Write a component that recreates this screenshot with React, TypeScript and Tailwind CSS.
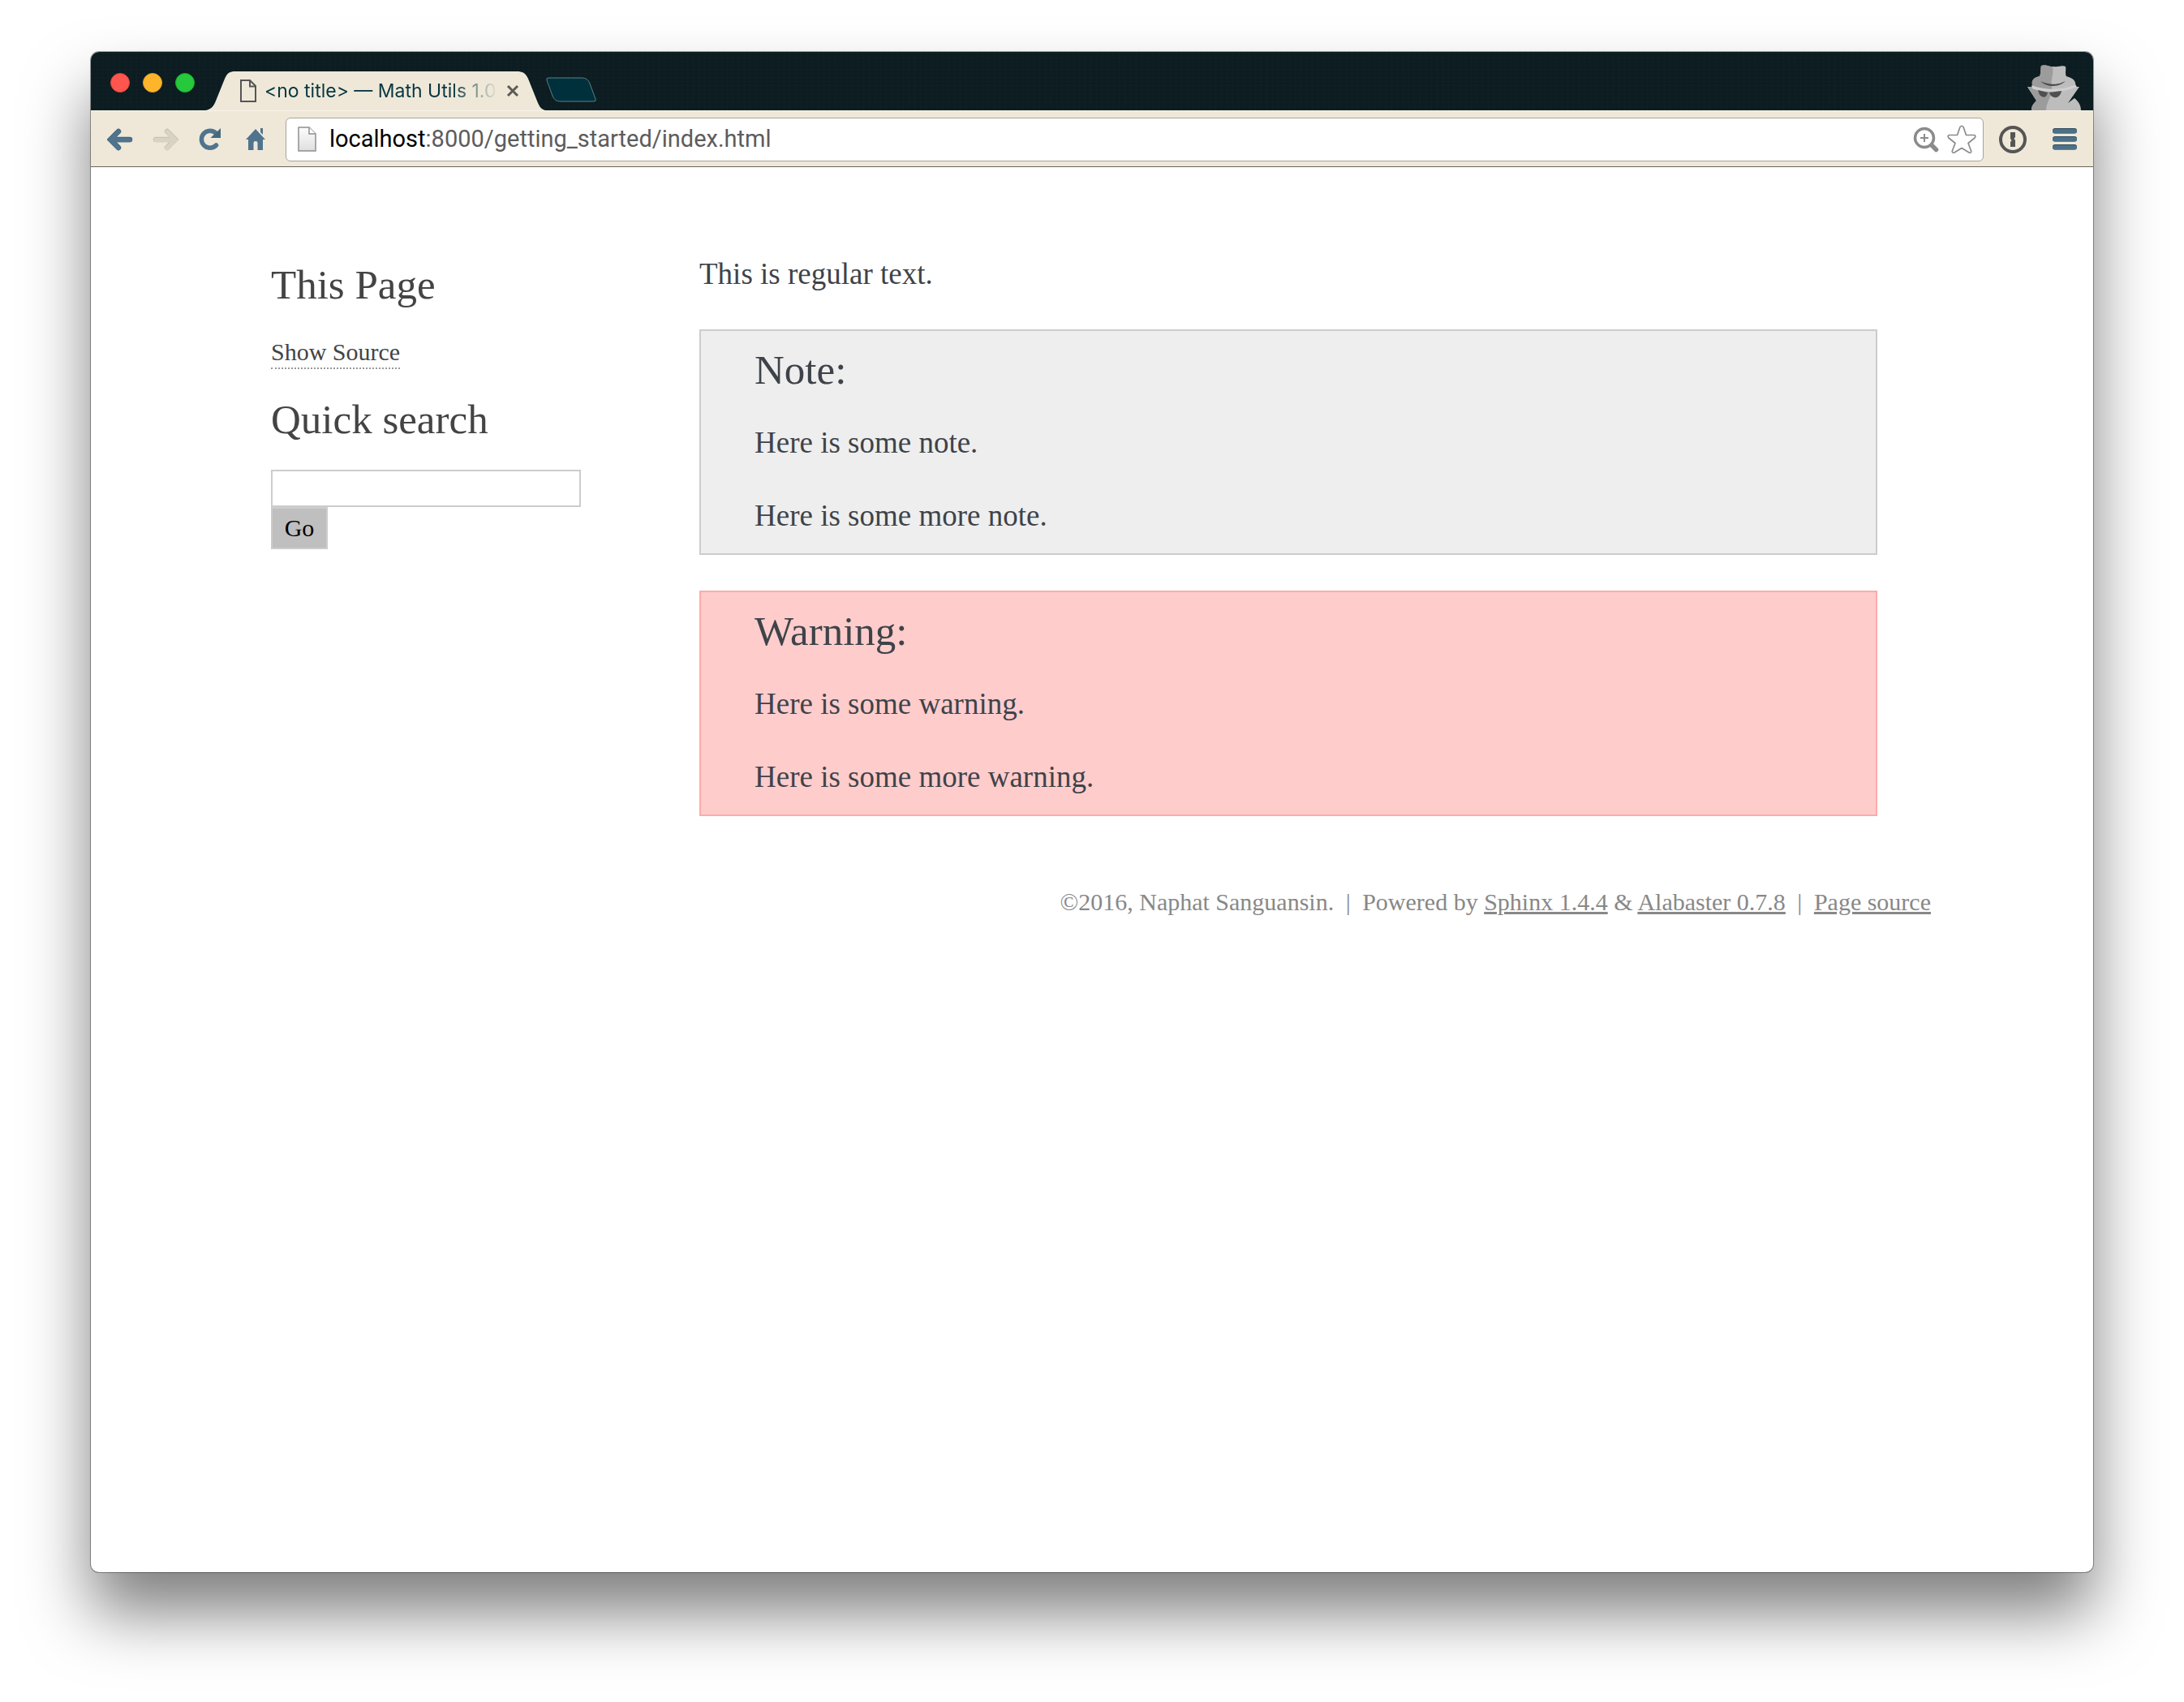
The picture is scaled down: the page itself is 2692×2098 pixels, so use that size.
import React from "react";

const serif = "font-['Liberation_Serif',serif]";

function TabShape() {
  return (
    <svg className="absolute inset-0 size-full" viewBox="0 0 416 49" preserveAspectRatio="none" aria-hidden="true">
      <path d="M0 49C7 47 9 44 12 37L23 9C26 2 29 0 36 0H381C388 0 392 2 395 9L406 37C409 44 410 47 416 49Z" fill="#efe8d8" />
    </svg>
  );
}

function DocIcon() {
  return (
    <svg width="20" height="28" viewBox="0 0 20 28" fill="none" stroke="#555" strokeWidth="2" aria-hidden="true">
      <path d="M1 1H12L19 8V27H1Z" />
      <path d="M12 1V8.500H19" />
    </svg>
  );
}

function PageIcon() {
  return (
    <svg width="24" height="32" viewBox="0 0 24 32" aria-hidden="true">
      <defs>
        <linearGradient id="page" x1="0" y1="0" x2="0" y2="1">
          <stop offset="0" stopColor="#fdfdfd" />
          <stop offset="1" stopColor="#dfdfdf" />
        </linearGradient>
      </defs>
      <path d="M1 1H14L22 9V30H1Z" fill="url(#page)" stroke="#8f8f8f" strokeWidth="1.500" />
      <path d="M14 1V9H22" fill="#fff" stroke="#8f8f8f" strokeWidth="1.500" />
    </svg>
  );
}

function Arrow({ flip }: { flip?: boolean }) {
  return (
    <svg width="32" height="30" viewBox="0 0 32 30" fill="none" strokeLinecap="round" strokeWidth="6.500" className={flip ? "-scale-x-100" : ""} aria-hidden="true">
      <path d="M14 5L4 15L14 25M5 15H28" stroke={flip ? "#c3beb1" : "#3f5f74"} />
      <path d="M14 5.500L4 15.500L14 25.500M5 15.500H28" stroke={flip ? "#d8d3c5" : "#50748e"} strokeWidth="5.500" />
    </svg>
  );
}

function ReloadIcon() {
  return (
    <svg width="30" height="30" viewBox="0 0 30 30" aria-hidden="true">
      <path d="M22.500 7.500A10.500 10.500 0 1 0 22.500 22" fill="none" stroke="#50748e" strokeWidth="5.500" strokeLinecap="round" />
      <path d="M28 1V13H15.500Z" fill="#46687f" />
    </svg>
  );
}

function HomeIcon() {
  return (
    <svg width="26" height="30" viewBox="0 0 26 30" fill="#50748e" aria-hidden="true">
      <path d="M13 2L25 15H22V28H15.500V19Q15.500 17 13 17Q10.500 17 10.500 19V28H4V15H1Z" />
      <path d="M19 1H22V9L19 6Z" />
    </svg>
  );
}

function ZoomIcon() {
  return (
    <svg width="32" height="32" viewBox="0 0 32 32" fill="none" stroke="#8b8b8b" aria-hidden="true">
      <circle cx="14" cy="14" r="11.500" strokeWidth="3.500" />
      <path d="M23 23L28.500 28.500" strokeWidth="5.500" strokeLinecap="round" />
      <path d="M14 9V19M9 14H19" strokeWidth="2" />
    </svg>
  );
}

function StarIcon() {
  return (
    <svg width="36" height="36" viewBox="0 0 36 36" fill="#fff" stroke="#8b8b8b" strokeWidth="1.700" strokeLinejoin="round" aria-hidden="true">
      <path d="M16 2.500Q18 0 20 2.500L23.500 12.500H33.500Q36 13.500 34 16L26 22.500L29.800 32.500Q29.500 35 27 34L18 28.500L9 34Q6.500 35 6.200 32.500L10 22.500L2 16Q0 13.500 2.500 12.500H12.500Z" />
    </svg>
  );
}

function KeyholeIcon() {
  return (
    <svg width="36" height="36" viewBox="0 0 36 36" aria-hidden="true">
      <circle cx="18" cy="18" r="15" fill="none" stroke="#555" strokeWidth="4" />
      <path d="M15 9H21V15L19.500 17L21 19V27H15V21L16.500 19L15 17Z" fill="#555" />
    </svg>
  );
}

function MenuIcon() {
  return (
    <svg width="30" height="28" viewBox="0 0 30 28" aria-hidden="true">
      {[0, 10, 20].map((y) => (
        <g key={y}>
          <rect y={y} width="30" height="6.500" rx="3" fill="#2f4a5c" />
          <rect y={y + 1} width="30" height="5.500" rx="2.700" fill="#4b7089" />
        </g>
      ))}
    </svg>
  );
}

function Incognito() {
  return (
    <svg width="68" height="57" viewBox="0 0 68 57" aria-hidden="true">
      <path d="M6 57C6 50 10 48 12 45L1 28H8C4 20 10 16 16 15C18 11 17 5 18 2C24 0 29 4 34 3C39 4 44 1 48 3C49 7 47 12 49 15C57 17 63 22 59 28H65L51 48L59 42C64 46 67 51 67 57Z" fill="#bdbdbd" />
      <path d="M6 57C6 50 10 48 12 45L1 28H8C4 20 10 16 16 15C18 11 17 5 18 2C23 0 28 3 32 4C34 12 29 21 31 27C33 38 24 46 24 57Z" fill="#9c9c9c" />
      <path d="M6 26C20 32 45 33 60 25L62 28C48 35 20 36 7 30Z" fill="#cfcfcf" />
      <path d="M17 21C28 26 38 26 48 21C40 29 25 29 17 21Z" fill="#4a4a4a" />
      <path d="M14 32L26 35C25 40 22 42 19 40C16 39 15 36 14 32ZM28 35L43 33C42 39 38 42 34 41C30 40 29 38 28 35Z" fill="#505050" />
    </svg>
  );
}

function BrowserChrome() {
  return (
    <header>
      <div className="flex h-[72px] items-end bg-[#0c1c20] bg-[repeating-linear-gradient(90deg,#12262a66_0_1px,transparent_1px_7px),repeating-linear-gradient(0deg,#12262a55_0_1px,transparent_1px_5px)] pl-6">
        <div className="flex gap-4 self-center pt-1">
          <button aria-label="Close window" className="size-6 rounded-full border border-[#e0443e] bg-[#ff554f]" />
          <button aria-label="Minimize window" className="size-6 rounded-full border border-[#dfa123] bg-[#ffb52b]" />
          <button aria-label="Zoom window" className="size-6 rounded-full border border-[#1dad2b] bg-[#26c83c]" />
        </div>
        <div className="relative ml-[14px] flex h-12 w-[418px] items-center pl-[42px] text-[23px] text-[#073642]">
          <TabShape />
          <div className="relative flex items-center gap-[10px]">
            <DocIcon />
            <span className="w-[288px] overflow-hidden font-['Inter',sans-serif] whitespace-nowrap [mask-image:linear-gradient(90deg,#000_80%,transparent)]">
              &lt;no title&gt; — Math Utils 1.0
            </span>
            <button aria-label="Close tab">
              <svg width="16" height="16" viewBox="0 0 16 16" stroke="#5d5b55" strokeWidth="3" aria-hidden="true">
                <path d="M2 2L14 14M14 2L2 14" />
              </svg>
            </button>
          </div>
        </div>
        <button aria-label="New tab" className="mb-[9px]">
          <svg width="64" height="32" viewBox="0 0 64 32" aria-hidden="true">
            <path d="M4 1H45C50 1 53 3 55 8L62 27Q63 30 60 30H19C14 30 11 28 9 23L2 4Q1 1 4 1Z" fill="#00303b" stroke="#5d8086" />
          </svg>
        </button>
        <div className="mr-[14px] ml-auto">
          <Incognito />
        </div>
      </div>
      <div className="flex h-[70px] items-center border-t border-b border-t-[#f8f3e8] border-b-[#6a665e] bg-[#efe8d8] pt-[2px] pr-5 pl-5">
        <div className="flex items-center gap-6">
          <button aria-label="Back"><Arrow /></button>
          <button aria-label="Forward"><Arrow flip /></button>
          <button aria-label="Reload"><ReloadIcon /></button>
          <button aria-label="Home" className="ml-1"><HomeIcon /></button>
        </div>
        <div className="ml-6 flex h-[54px] flex-1 items-center rounded-md border border-[#a9a498] bg-white pr-2 pl-[14px] font-['Roboto',sans-serif] text-[29px] text-[#5c5c5c]">
          <PageIcon />
          <div className="ml-[15px] flex-1" role="textbox" aria-label="Address">
            <span className="text-black">localhost</span>:8000/getting_started/index.html
          </div>
          <button aria-label="Page zoom"><ZoomIcon /></button>
          <button aria-label="Bookmark this page" className="ml-[10px]"><StarIcon /></button>
        </div>
        <button aria-label="Password manager" className="ml-[18px]"><KeyholeIcon /></button>
        <button aria-label="Menu" className="ml-[31px]"><MenuIcon /></button>
      </div>
    </header>
  );
}

function Sidebar() {
  return (
    <aside className="w-[528px] shrink-0 pt-[7px] text-[#444]">
      <h3 className="text-[51px] leading-[60px]">This Page</h3>
      <a href="#source" className="mt-[34px] inline-block border-b-2 border-dotted border-[#999] align-top text-[30px] leading-[38px]">
        Show Source
      </a>
      <h3 className="mt-8 text-[51px] leading-[60px]">
        <label htmlFor="search">Quick search</label>
      </h3>
      <form className="mt-8" onSubmit={(e) => e.preventDefault()}>
        <input id="search" type="text" className="block h-[46px] w-[382px] border-2 border-[#ccc] bg-white px-2 text-[30px]" />
        <button className="block h-[52px] w-[70px] border-2 border-[#ccc] bg-[#bfbfbf] text-[30px] leading-[40px] text-black">Go</button>
      </form>
    </aside>
  );
}

function Admonition({ title, lines, tone }: { title: string; lines: string[]; tone: string }) {
  return (
    <section className={`border-2 px-[66px] pt-[18px] pb-[22px] ${tone}`}>
      <h4 className="text-[51px] leading-[60px]">{title}</h4>
      <div className="mt-9 flex flex-col gap-[42px]">
        {lines.map((line) => (
          <p key={line}>{line}</p>
        ))}
      </div>
    </section>
  );
}

export default function App() {
  return (
    <div className="flex min-h-screen flex-col bg-white px-28 pt-16 pb-40">
      <div className="flex flex-1 flex-col overflow-hidden rounded-[10px] bg-white shadow-[0_0_0_1px_rgba(0,0,0,0.35),0_50px_80px_rgba(0,0,0,0.5)]">
        <BrowserChrome />
        <div className={`pt-[108px] pr-[200px] pl-[222px] ${serif} text-[37px] leading-[48px] text-[#3e4349]`}>
          <div className="flex">
            <Sidebar />
            <main className="mr-[66px] flex flex-1 flex-col gap-11">
              <p>This is regular text.</p>
              <Admonition title="Note:" lines={["Here is some note.", "Here is some more note."]} tone="border-[#ccc] bg-[#eee]" />
              <Admonition title="Warning:" lines={["Here is some warning.", "Here is some more warning."]} tone="border-[#faa] bg-[#fcc]" />
            </main>
          </div>
          <footer className="mt-[86px] text-right text-[30px] leading-[40px] text-[#888]">
            ©2016, Naphat Sanguansin. <span className="px-[7px]">|</span> Powered by <a href="#sphinx" className="underline">Sphinx 1.4.4</a> &amp;{" "}
            <a href="#alabaster" className="underline">Alabaster 0.7.8</a> <span className="px-[7px]">|</span>{" "}
            <a href="#page-source" className="underline">Page source</a>
          </footer>
        </div>
      </div>
    </div>
  );
}
